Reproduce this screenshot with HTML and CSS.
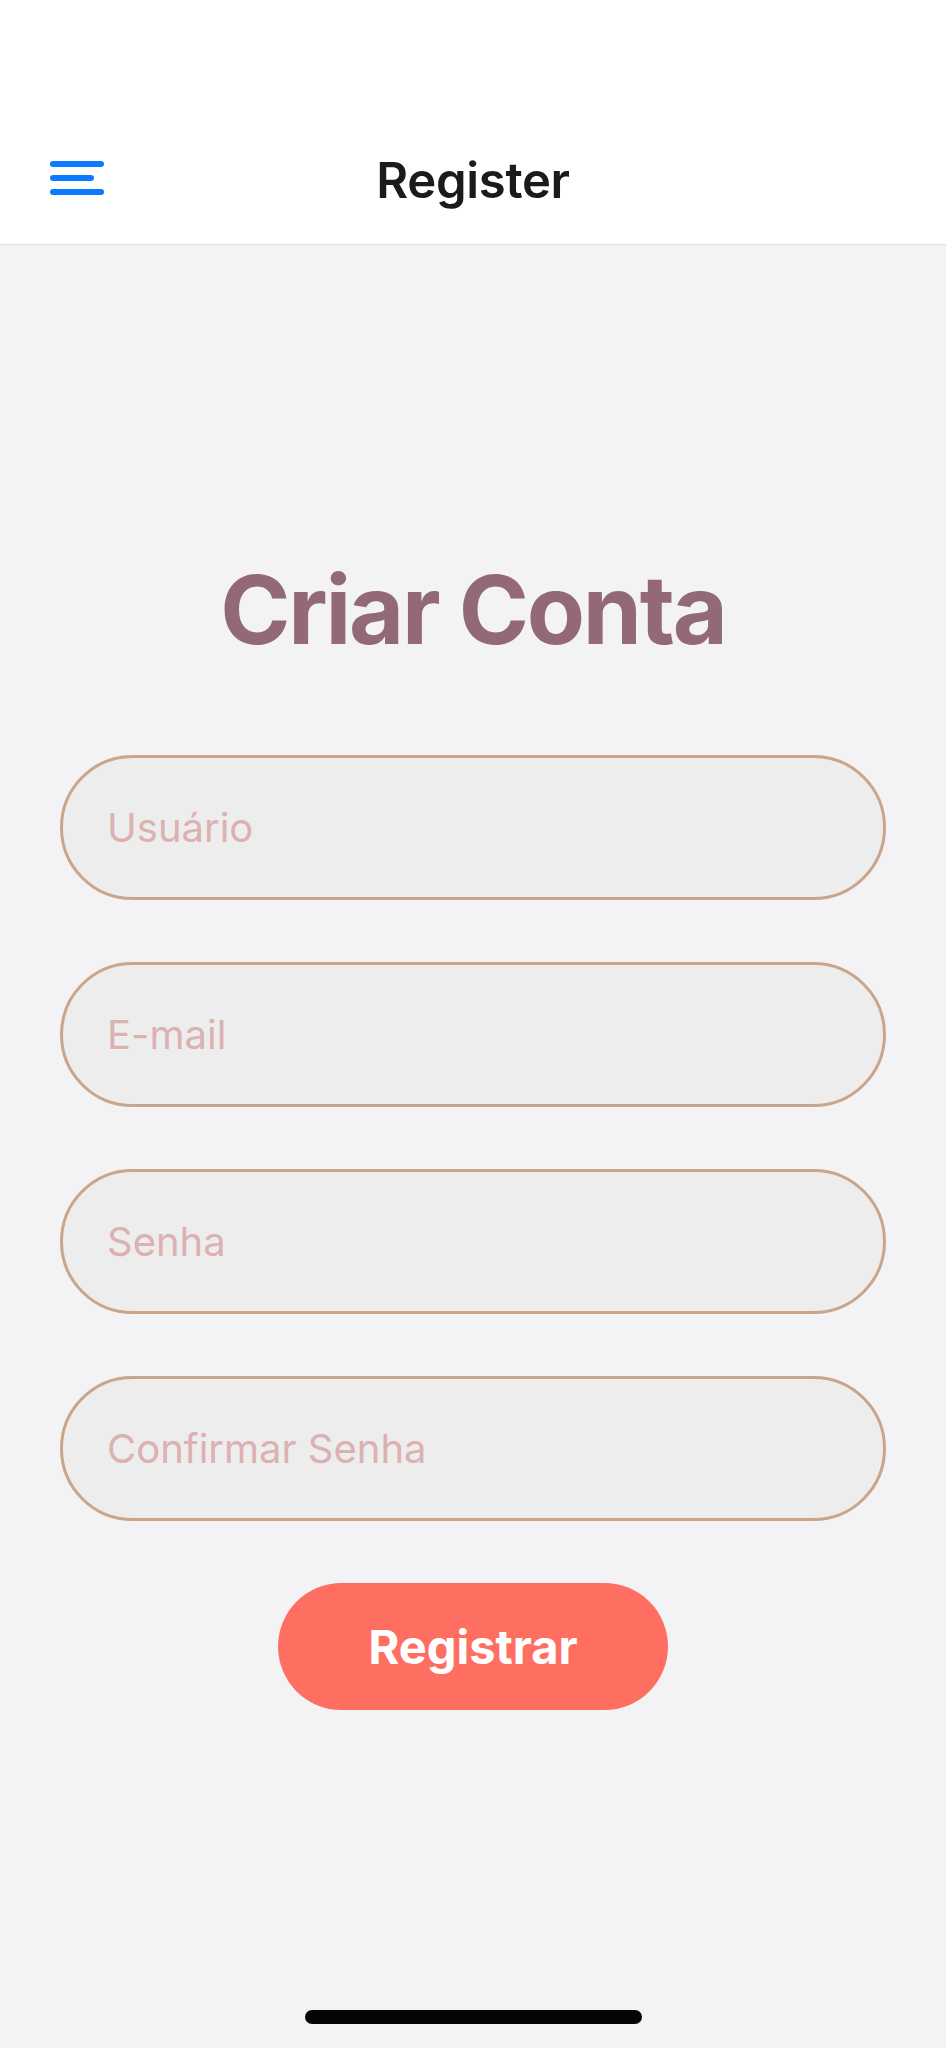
FILE: index.html
```html
<!DOCTYPE html>
<html lang="pt">
<head>
<meta charset="utf-8">
<title>Register</title>
<link rel="stylesheet" href="styles.css">
</head>
<body>
<div class="screen">
  <header class="header">
    <div class="nav">
      <button class="menu" aria-label="Menu">
        <svg width="54" height="36" viewBox="0 0 54 36">
          <line x1="3" y1="4" x2="51" y2="4" stroke="#0a7aff" stroke-width="6" stroke-linecap="round"/>
          <line x1="3" y1="18" x2="41" y2="18" stroke="#0a7aff" stroke-width="6" stroke-linecap="round"/>
          <line x1="3" y1="32" x2="51" y2="32" stroke="#0a7aff" stroke-width="6" stroke-linecap="round"/>
        </svg>
      </button>
      <h1 class="nav-title">Register</h1>
    </div>
  </header>
  <main class="content">
    <h2 class="title">Criar Conta</h2>
    <form class="form">
      <input class="field" type="text" placeholder="Usuário">
      <input class="field" type="email" placeholder="E-mail">
      <input class="field" type="password" placeholder="Senha">
      <input class="field" type="password" placeholder="Confirmar Senha">
      <button class="submit" type="button">Registrar</button>
    </form>
  </main>
  <div class="home-indicator"></div>
</div>
</body>
</html>
```

FILE: styles.css
```css
* { box-sizing: border-box; }
html, body { margin: 0; padding: 0; }
body {
  font-family: "Inter", "Liberation Sans", sans-serif;
  background: #f3f2f5;
}
.screen {
  width: 946px;
  height: 2048px;
  display: flex;
  flex-direction: column;
  background: #f3f2f5;
}
.header {
  background: #ffffff;
  padding-top: 116px;
  border-bottom: 1px solid #e2e1e4;
}
.nav {
  height: 128px;
  display: flex;
  align-items: center;
  justify-content: center;
  position: relative;
}
.menu {
  position: absolute;
  left: 50px;
  top: 44px;
  padding: 0;
  border: 0;
  background: transparent;
  display: flex;
}
.nav-title {
  margin: 0;
  font-size: 49px;
  font-weight: 600;
  color: #1b1b1d;
  letter-spacing: -0.3px;
}
.content {
  display: flex;
  flex-direction: column;
  align-items: center;
  padding-top: 308px;
}
.title {
  margin: 0;
  font-size: 95px;
  line-height: 114px;
  font-weight: 700;
  color: #936977;
  letter-spacing: -2.2px;
}
.form {
  margin-top: 88px;
  width: 826px;
  display: flex;
  flex-direction: column;
  align-items: center;
  gap: 62px;
}
.field {
  width: 100%;
  height: 145px;
  border: 3px solid #c9a58a;
  border-radius: 73px;
  background: #ededed;
  padding: 0 0 0 44px;
  font-family: inherit;
  font-size: 40px;
  color: #333;
  outline: none;
}
.field::placeholder { color: #dcb1b1; }
.submit {
  width: 390px;
  height: 127px;
  border: 0;
  border-radius: 64px;
  background: #ff6f61;
  color: #ffffff;
  font-family: inherit;
  font-size: 47px;
  font-weight: 700;
}
.home-indicator {
  margin: auto auto 24px;
  width: 337px;
  height: 14px;
  border-radius: 7px;
  background: #050505;
}
```
